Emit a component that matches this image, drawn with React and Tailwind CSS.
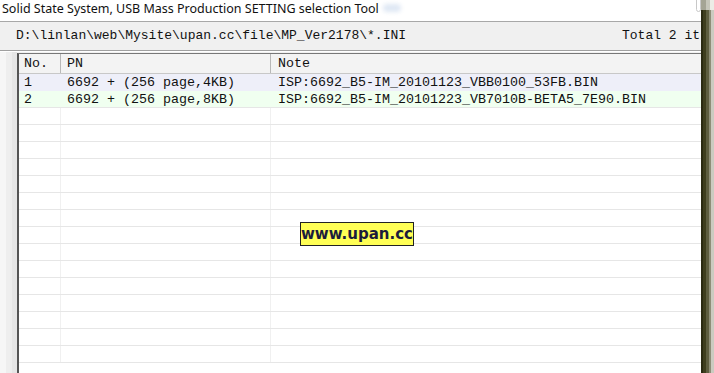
import React from "react";

const mono = { fontFamily: '"Liberation Mono", "Courier New", monospace' };

export default function App() {
  const empty = Array.from({ length: 15 });
  return (
    <div className="w-[714px] h-[373px] overflow-hidden grid grid-cols-[701px_13px] bg-[#3a3a1c] relative">
      <div className="h-[373px] flex flex-col overflow-hidden">
        {/* title bar */}
        <div className="h-[22px] shrink-0 bg-white border-b border-[#a8a8a8] flex items-start relative">
          <span
            className="pl-[2px] pt-[1px] text-[12.5px] leading-[16px] text-[#111] whitespace-nowrap"
            style={{ fontFamily: '"Noto Sans", "Open Sans", sans-serif' }}
          >
            Solid State System, USB Mass Production SETTING selection Tool
          </span>
          <span className="ml-[4px] mt-[4px] w-[18px] h-[8px] rounded-full bg-[#dfe8f4] blur-[2px]" />
          <div className="absolute right-0 top-[-4px] w-[5px] h-[16px] border border-[#c8c8c8] rounded-[3px] bg-white" />
        </div>
        {/* content */}
        <div className="flex-1 min-h-0 bg-[#f0f0f0] flex flex-col">
          <div className="h-[28px] shrink-0 flex items-center justify-between pl-[16px] text-[13px] text-[#111] whitespace-nowrap" style={mono}>
            <span>D:\linlan\web\Mysite\upan.cc\file\MP_Ver2178\*.INI</span>
            <span className="w-[79px]">Total 2 it</span>
          </div>
          <div className="shrink-0 border-t border-[#a0a0a0] border-b border-b-white" />
          <div className="flex-1 min-h-0 flex">
            <div className="w-[17px] shrink-0 flex">
              <div className="w-[6px] bg-[#f6f6f6]" />
              <div className="w-[6px] bg-[#eeeeee]" />
              <div className="w-[5px] bg-[#e6e6e6]" />
            </div>
            <div className="flex-1 min-w-0 mt-[1px] border-l-[2px] border-t border-l-[#555] border-t-[#777] bg-white overflow-hidden text-[13.33px] text-[#111]" style={mono}>
              {/* header */}
              <div className="h-[20px] flex border-b border-[#c8c8c8] bg-[#f3f3f3]">
                <div className="w-[42px] shrink-0 pl-[5px] leading-[20px] border-r border-[#b8b8b8]">No.</div>
                <div className="w-[210px] shrink-0 pl-[6px] leading-[20px] border-r border-[#b8b8b8]">PN</div>
                <div className="flex-1 pl-[7px] leading-[20px]">Note</div>
              </div>
              {/* rows */}
              <div className="h-[17px] flex bg-[#eeeff9] leading-[17px]">
                <div className="w-[42px] shrink-0 pl-[5px]">1</div>
                <div className="w-[210px] shrink-0 pl-[6px] whitespace-pre">6692 + (256 page,4KB)</div>
                <div className="flex-1 pl-[7px] whitespace-nowrap">ISP:6692_B5-IM_20101123_VBB0100_53FB.BIN</div>
              </div>
              <div className="h-[17px] flex bg-[#f0fff0] leading-[17px] border-b border-[#e6e6e6]">
                <div className="w-[42px] shrink-0 pl-[5px]">2</div>
                <div className="w-[210px] shrink-0 pl-[6px] whitespace-pre">6692 + (256 page,8KB)</div>
                <div className="flex-1 pl-[7px] whitespace-nowrap">ISP:6692_B5-IM_20101223_VB7010B-BETA5_7E90.BIN</div>
              </div>
              {empty.map((_, i) => (
                <div key={i} className="h-[17px] flex border-b border-[#e6e6e6]">
                  <div className="w-[42px] shrink-0 border-r border-[#f0f0f0]" />
                  <div className="w-[210px] shrink-0 border-r border-[#f0f0f0]" />
                  <div className="flex-1" />
                </div>
              ))}
            </div>
          </div>
        </div>
      </div>
      {/* right shadow strip */}
      <div className="h-[373px] grid grid-rows-[10px_1fr]">
        <div className="grid grid-cols-[5px_4px_4px]">
          <div className="bg-[#a4a494]" />
          <div className="bg-[#c6c6ba]" />
          <div className="bg-[#ecece6]" />
        </div>
        <div className="grid grid-cols-[2px_3px_3px_2px_3px]">
          <div className="bg-[#2a2a12]" />
          <div className="bg-[#3e3e1e]" />
          <div className="bg-[#5e5e40]" />
          <div className="bg-[#8e8e78]" />
          <div className="bg-[#cbcbc0]" />
        </div>
      </div>
      {/* watermark */}
      <div className="absolute left-[300px] top-[222px] w-[114px] h-[24px] bg-[#ffff55] border border-[#222] flex items-center justify-center">
        <span className="text-[15px] font-bold text-[#1c1c3c] leading-none" style={{ fontFamily: '"DejaVu Sans", Verdana, sans-serif' }}>
          www.upan.cc
        </span>
      </div>
    </div>
  );
}
